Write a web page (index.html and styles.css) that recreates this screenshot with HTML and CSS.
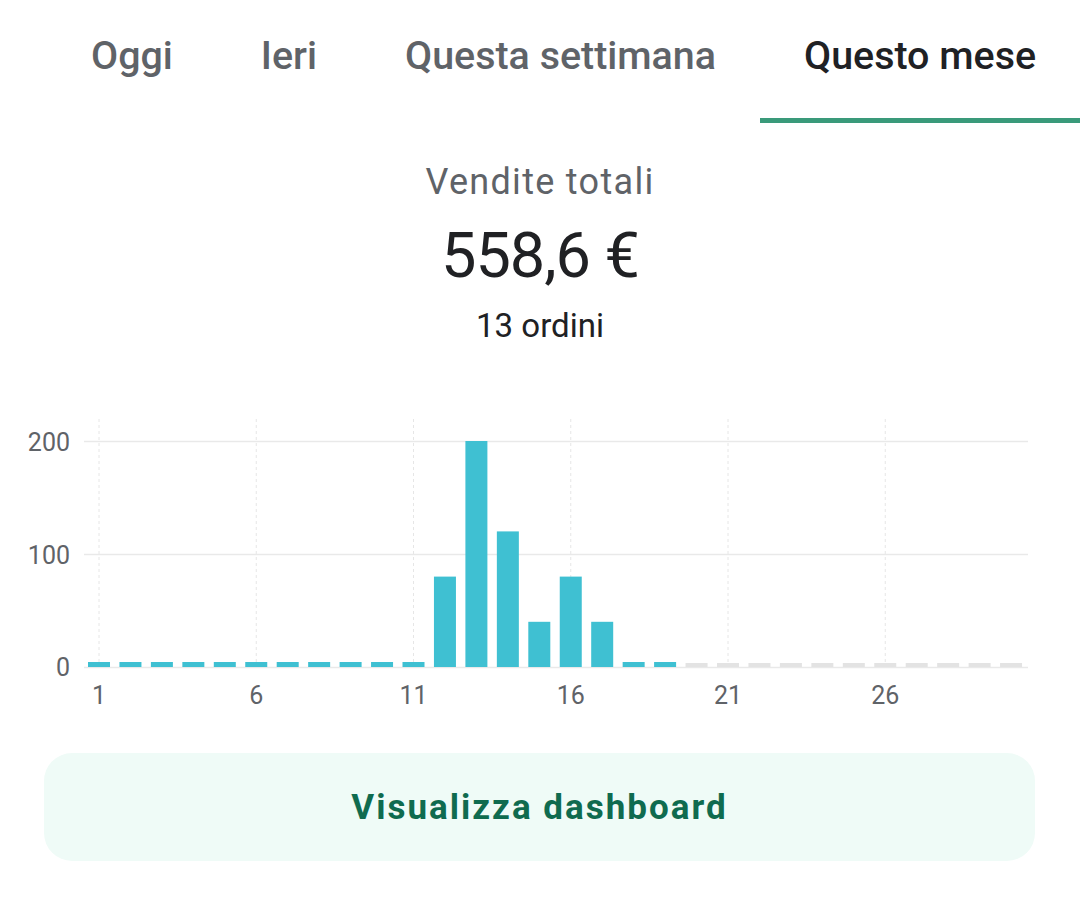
FILE: index.html
```html
<!DOCTYPE html>
<html lang="it">
<head>
    <meta charset="UTF-8">
    <meta name="viewport" content="width=device-width, initial-scale=1.0">
    <title>Vendite</title>
    <link rel="stylesheet" href="styles.css">
</head>
<body>
    <div class="tabs">
        <div class="tab">Oggi</div>
        <div class="tab">Ieri</div>
        <div class="tab">Questa settimana</div>
        <div class="tab active">Questo mese</div>
    </div>

    <div class="summary">
        <div class="summary-label">Vendite totali</div>
        <div class="summary-amount">558,6 €</div>
        <div class="summary-orders">13 ordini</div>
    </div>

    <div class="chart">
        <svg width="1080" height="300" viewBox="0 0 1080 300">
            <!-- vertical grid (days 1, 6, 11, 16, 21, 26) -->
            <g class="grid-v">
                <line x1="99" y1="0" x2="99" y2="248"/>
                <line x1="256.25" y1="0" x2="256.25" y2="248"/>
                <line x1="413.5" y1="0" x2="413.5" y2="248"/>
                <line x1="570.75" y1="0" x2="570.75" y2="248"/>
                <line x1="728" y1="0" x2="728" y2="248"/>
                <line x1="885.25" y1="0" x2="885.25" y2="248"/>
            </g>
            <g class="grid-h">
                <line x1="84" y1="22.5" x2="1028" y2="22.5"/>
                <line x1="84" y1="135.5" x2="1028" y2="135.5"/>
                <line x1="84" y1="248.5" x2="1028" y2="248.5"/>
            </g>

            <g class="bars">
                <rect x="88" y="243" width="22" height="5"/>
                <rect x="119.45" y="243" width="22" height="5"/>
                <rect x="150.9" y="243" width="22" height="5"/>
                <rect x="182.35" y="243" width="22" height="5"/>
                <rect x="213.8" y="243" width="22" height="5"/>
                <rect x="245.25" y="243" width="22" height="5"/>
                <rect x="276.7" y="243" width="22" height="5"/>
                <rect x="308.15" y="243" width="22" height="5"/>
                <rect x="339.6" y="243" width="22" height="5"/>
                <rect x="371.05" y="243" width="22" height="5"/>
                <rect x="402.5" y="243" width="22" height="5"/>
                <rect x="433.95" y="157.6" width="22" height="90.4"/>
                <rect x="465.4" y="22" width="22" height="226"/>
                <rect x="496.85" y="112.4" width="22" height="135.6"/>
                <rect x="528.3" y="202.8" width="22" height="45.2"/>
                <rect x="559.75" y="157.6" width="22" height="90.4"/>
                <rect x="591.2" y="202.8" width="22" height="45.2"/>
                <rect x="622.65" y="243" width="22" height="5"/>
                <rect x="654.1" y="243" width="22" height="5"/>
            </g>
            <g class="bars-empty">
                <rect x="685.55" y="244" width="22" height="4"/>
                <rect x="717" y="244" width="22" height="4"/>
                <rect x="748.45" y="244" width="22" height="4"/>
                <rect x="779.9" y="244" width="22" height="4"/>
                <rect x="811.35" y="244" width="22" height="4"/>
                <rect x="842.8" y="244" width="22" height="4"/>
                <rect x="874.25" y="244" width="22" height="4"/>
                <rect x="905.7" y="244" width="22" height="4"/>
                <rect x="937.15" y="244" width="22" height="4"/>
                <rect x="968.6" y="244" width="22" height="4"/>
                <rect x="1000.05" y="244" width="22" height="4"/>
            </g>

            <g class="axis-y">
                <text x="70" y="32">200</text>
                <text x="70" y="145">100</text>
                <text x="70" y="257">0</text>
            </g>
            <g class="axis-x">
                <text x="99" y="285">1</text>
                <text x="256.25" y="285">6</text>
                <text x="413.5" y="285">11</text>
                <text x="570.75" y="285">16</text>
                <text x="728" y="285">21</text>
                <text x="885.25" y="285">26</text>
            </g>
        </svg>
    </div>

    <button class="dashboard-button">Visualizza dashboard</button>
</body>
</html>
```

FILE: styles.css
```css
body {
    margin: 0;
    font-family: 'Roboto', 'Noto Sans', sans-serif;
    background-color: #fff;
    color: #202124;
}

.tabs {
    display: flex;
    padding-left: 47px;
    height: 123px;
    overflow: hidden;
}

.tab {
    padding: 32px 44px 0;
    height: 86px;
    font-size: 39.4px;
    line-height: 48px;
    font-weight: 500;
    color: #5f6368;
    white-space: nowrap;
    border-bottom: 5px solid transparent;
}

.tab.active {
    color: #202124;
    border-bottom-color: #3a9a7a; /* green indicator */
}

.summary {
    display: flex;
    flex-direction: column;
    align-items: center;
    margin-top: 38px;
}

.summary-label {
    font-size: 36px;
    line-height: 42px;
    letter-spacing: 1.3px;
    color: #5f6368;
}

.summary-amount {
    margin-top: 16px;
    font-size: 63px;
    line-height: 74px;
    letter-spacing: -1px;
    color: #202124;
}

.summary-orders {
    margin-top: 13px;
    font-size: 33px;
    line-height: 40px;
    color: #202124;
}

.chart {
    margin-top: 73px;
    height: 300px;
}

.chart svg {
    display: block;
}

.grid-v line {
    stroke: #e6e6e6;
    stroke-width: 1;
    stroke-dasharray: 3 3;
}

.grid-h line {
    stroke: #e9e9e9;
    stroke-width: 1.5;
}

.bars rect {
    fill: #3fc0d2;
}

.bars-empty rect {
    fill: #e3e3e3;
}

.axis-y text,
.axis-x text {
    font-family: 'Roboto', sans-serif;
    font-size: 25px;
    fill: #5f6368;
}

.axis-y text {
    text-anchor: end;
}

.axis-x text {
    text-anchor: middle;
}

.dashboard-button {
    display: block;
    width: 991px;
    height: 108px;
    margin: 34px 0 0 44px;
    border: none;
    border-radius: 28px;
    background-color: #effbf7; /* light mint */
    color: #0f6b4f;
    font-family: 'Roboto', sans-serif;
    font-size: 35px;
    font-weight: 700;
    letter-spacing: 2px;
    cursor: pointer;
}
```
